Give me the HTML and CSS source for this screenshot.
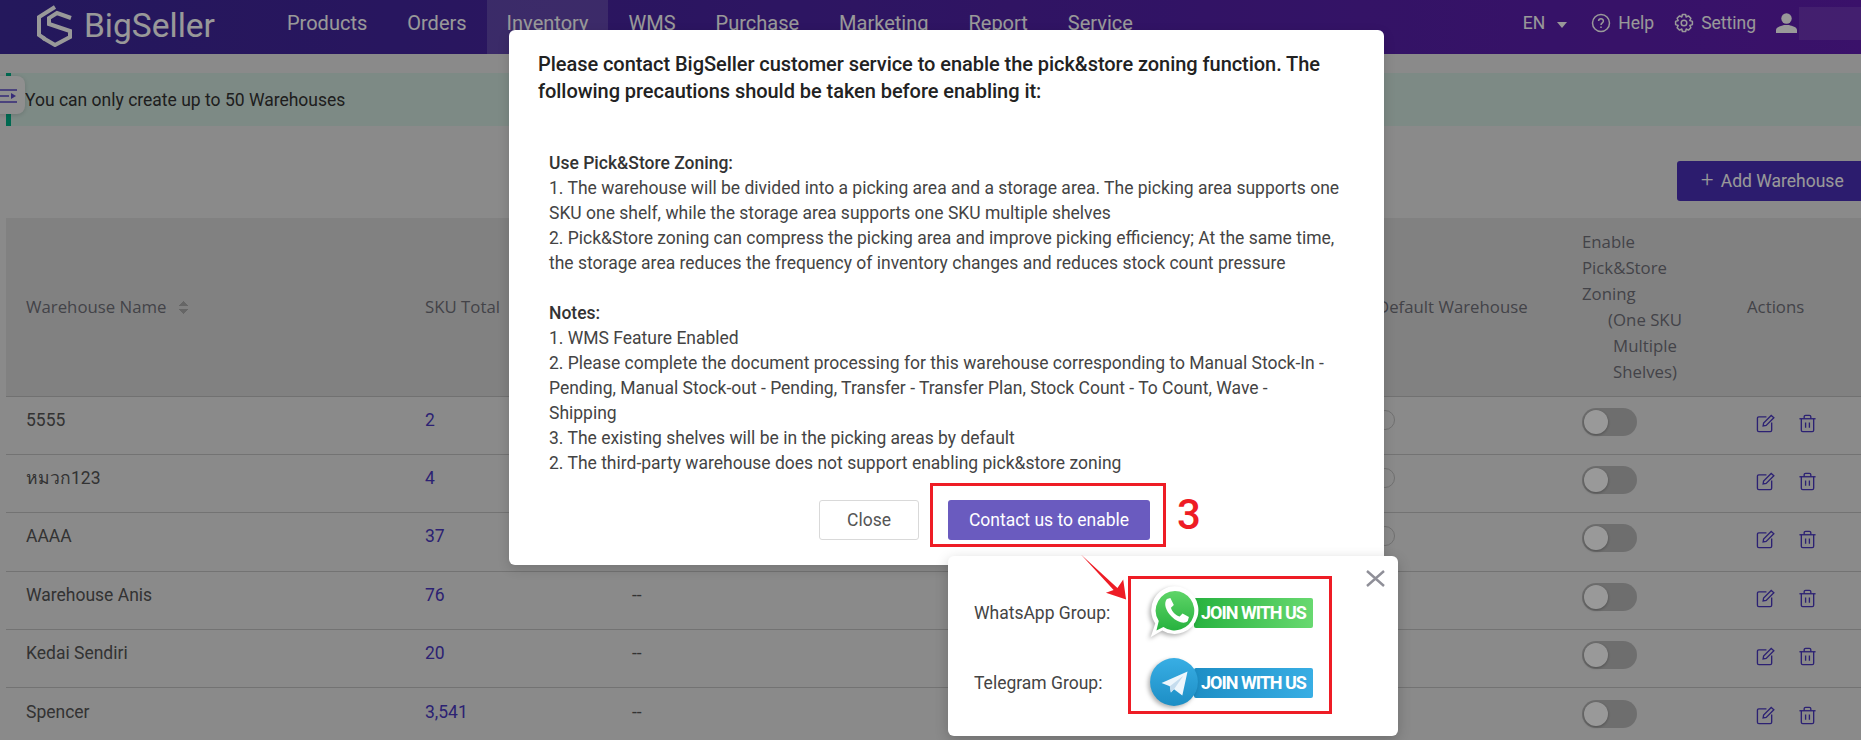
FILE: index.html
```html
<!DOCTYPE html>
<html>
<head>
    <title>BigSeller - Warehouses</title>
    <link rel="stylesheet" href="styles.css">
</head>
<body>
    <header class="topbar">
        <div class="logo">
            <svg class="logo-mark" viewBox="0 0 36 42" fill="none" stroke="currentColor" stroke-width="4">
                <path d="M18 2 L2 12 V30 L8 34"/>
                <path d="M34 13 L20 8 L12 13 V19 L33 26 V32 L18 40 L6 33"/>
            </svg>
            <span class="logo-text">BigSeller</span>
        </div>
        <nav class="nav">
            <a class="nav-item">Products</a>
            <a class="nav-item">Orders</a>
            <a class="nav-item active">Inventory</a>
            <a class="nav-item">WMS</a>
            <a class="nav-item">Purchase</a>
            <a class="nav-item">Marketing</a>
            <a class="nav-item">Report</a>
            <a class="nav-item">Service</a>
        </nav>
        <div class="top-right">
            <span class="lang">EN <i class="caret"></i></span>
            <span class="top-link">
                <svg class="top-icon" viewBox="0 0 20 20" fill="none" stroke="currentColor" stroke-width="1.5">
                    <circle cx="10" cy="10" r="8.5"/>
                    <path d="M7.6 8 C7.6 5 12.4 5 12.4 8 C12.4 10 10 9.8 10 12"/>
                    <path d="M10 13.6 V15"/>
                </svg>
                Help
            </span>
            <span class="top-link">
                <svg class="top-icon" viewBox="0 0 20 20" fill="none" stroke="currentColor" stroke-width="1.5">
                    <path d="M8.4 1.5 H11.6 L12.2 4 L14.4 2.9 L16.9 5.2 L15.8 7.5 L18.4 8.4 V11.6 L15.8 12.5 L16.9 14.8 L14.4 17.1 L12.2 16 L11.6 18.5 H8.4 L7.8 16 L5.6 17.1 L3.1 14.8 L4.2 12.5 L1.6 11.6 V8.4 L4.2 7.5 L3.1 5.2 L5.6 2.9 L7.8 4 Z" stroke-linejoin="round"/>
                    <circle cx="10" cy="10" r="2.8"/>
                </svg>
                Setting
            </span>
            <svg class="user-icon" viewBox="0 0 21 20" fill="currentColor">
                <circle cx="10.5" cy="5.5" r="5.2"/>
                <path d="M0 20 V17 C0 14 5 13 8 12 H13 C16 13 21 14 21 17 V20 Z"/>
            </svg>
            <span class="user-name"></span>
        </div>
    </header>

    <main class="content">
        <div class="alert">You can only create up to 50 Warehouses</div>
        <div class="toolbar">
            <button class="add-btn"><span class="plus">+</span> Add Warehouse</button>
        </div>
        <table class="wh-table">
            <colgroup>
                <col class="col-name">
                <col class="col-sku">
                <col class="col-type">
                <col class="col-default">
                <col class="col-zoning">
                <col class="col-actions">
            </colgroup>
            <thead>
                <tr>
                    <th>Warehouse Name <i class="sort"></i></th>
                    <th>SKU Total</th>
                    <th></th>
                    <th>Default Warehouse</th>
                    <th>
                        Enable<br>Pick&amp;Store<br>Zoning
                        <div class="th-center">(One SKU Multiple Shelves)</div>
                    </th>
                    <th>Actions</th>
                </tr>
            </thead>
            <tbody>
                <tr>
                    <td>5555</td><td class="sku">2</td><td></td>
                    <td><i class="radio"></i></td>
                    <td><i class="switch"></i></td>
                    <td class="actions">
                        <svg class="act" viewBox="0 0 20 20"><path d="M11 3 H3 Q1.5 3 1.5 4.5 V17 Q1.5 18.500 3 18.500 H15 Q16.500 18.500 16.500 17 V9"/><path d="M7.500 12.500 L8 9.500 L16 1.500 L18.800 4 L10.700 12 Z"/></svg>
                        <svg class="act" viewBox="0 0 20 20"><path d="M1.500 5 H18.500"/><path d="M6.500 5 V3 Q6.500 1.500 8 1.500 H12 Q13.500 1.500 13.500 3 V5"/><path d="M3.500 5 V17 Q3.500 18.500 5 18.500 H15 Q16.500 18.500 16.500 17 V5"/><path d="M8 9 V14.500 M12 9 V14.500"/></svg>
                    </td>
                </tr>
                <tr>
                    <td>หมวก123</td><td class="sku">4</td><td></td>
                    <td><i class="radio"></i></td>
                    <td><i class="switch"></i></td>
                    <td class="actions">
                        <svg class="act" viewBox="0 0 20 20"><path d="M11 3 H3 Q1.5 3 1.5 4.5 V17 Q1.5 18.500 3 18.500 H15 Q16.500 18.500 16.500 17 V9"/><path d="M7.500 12.500 L8 9.500 L16 1.500 L18.800 4 L10.700 12 Z"/></svg>
                        <svg class="act" viewBox="0 0 20 20"><path d="M1.500 5 H18.500"/><path d="M6.500 5 V3 Q6.500 1.500 8 1.500 H12 Q13.500 1.500 13.500 3 V5"/><path d="M3.500 5 V17 Q3.500 18.500 5 18.500 H15 Q16.500 18.500 16.500 17 V5"/><path d="M8 9 V14.500 M12 9 V14.500"/></svg>
                    </td>
                </tr>
                <tr>
                    <td>AAAA</td><td class="sku">37</td><td></td>
                    <td><i class="radio"></i></td>
                    <td><i class="switch"></i></td>
                    <td class="actions">
                        <svg class="act" viewBox="0 0 20 20"><path d="M11 3 H3 Q1.5 3 1.5 4.5 V17 Q1.5 18.500 3 18.500 H15 Q16.500 18.500 16.500 17 V9"/><path d="M7.500 12.500 L8 9.500 L16 1.500 L18.800 4 L10.700 12 Z"/></svg>
                        <svg class="act" viewBox="0 0 20 20"><path d="M1.500 5 H18.500"/><path d="M6.500 5 V3 Q6.500 1.500 8 1.500 H12 Q13.500 1.500 13.500 3 V5"/><path d="M3.500 5 V17 Q3.500 18.500 5 18.500 H15 Q16.500 18.500 16.500 17 V5"/><path d="M8 9 V14.500 M12 9 V14.500"/></svg>
                    </td>
                </tr>
                <tr>
                    <td>Warehouse Anis</td><td class="sku">76</td><td>--</td>
                    <td><i class="radio"></i></td>
                    <td><i class="switch"></i></td>
                    <td class="actions">
                        <svg class="act" viewBox="0 0 20 20"><path d="M11 3 H3 Q1.5 3 1.5 4.5 V17 Q1.5 18.500 3 18.500 H15 Q16.500 18.500 16.500 17 V9"/><path d="M7.500 12.500 L8 9.500 L16 1.500 L18.800 4 L10.700 12 Z"/></svg>
                        <svg class="act" viewBox="0 0 20 20"><path d="M1.500 5 H18.500"/><path d="M6.500 5 V3 Q6.500 1.500 8 1.500 H12 Q13.500 1.500 13.500 3 V5"/><path d="M3.500 5 V17 Q3.500 18.500 5 18.500 H15 Q16.500 18.500 16.500 17 V5"/><path d="M8 9 V14.500 M12 9 V14.500"/></svg>
                    </td>
                </tr>
                <tr>
                    <td>Kedai Sendiri</td><td class="sku">20</td><td>--</td>
                    <td><i class="radio"></i></td>
                    <td><i class="switch"></i></td>
                    <td class="actions">
                        <svg class="act" viewBox="0 0 20 20"><path d="M11 3 H3 Q1.5 3 1.5 4.5 V17 Q1.5 18.500 3 18.500 H15 Q16.500 18.500 16.500 17 V9"/><path d="M7.500 12.500 L8 9.500 L16 1.500 L18.800 4 L10.700 12 Z"/></svg>
                        <svg class="act" viewBox="0 0 20 20"><path d="M1.500 5 H18.500"/><path d="M6.500 5 V3 Q6.500 1.500 8 1.500 H12 Q13.500 1.500 13.500 3 V5"/><path d="M3.500 5 V17 Q3.500 18.500 5 18.500 H15 Q16.500 18.500 16.500 17 V5"/><path d="M8 9 V14.500 M12 9 V14.500"/></svg>
                    </td>
                </tr>
                <tr>
                    <td>Spencer</td><td class="sku">3,541</td><td>--</td>
                    <td><i class="radio"></i></td>
                    <td><i class="switch"></i></td>
                    <td class="actions">
                        <svg class="act" viewBox="0 0 20 20"><path d="M11 3 H3 Q1.5 3 1.5 4.5 V17 Q1.5 18.500 3 18.500 H15 Q16.500 18.500 16.500 17 V9"/><path d="M7.500 12.500 L8 9.500 L16 1.500 L18.800 4 L10.700 12 Z"/></svg>
                        <svg class="act" viewBox="0 0 20 20"><path d="M1.500 5 H18.500"/><path d="M6.500 5 V3 Q6.500 1.500 8 1.500 H12 Q13.500 1.500 13.500 3 V5"/><path d="M3.500 5 V17 Q3.500 18.500 5 18.500 H15 Q16.500 18.500 16.500 17 V5"/><path d="M8 9 V14.500 M12 9 V14.500"/></svg>
                    </td>
                </tr>
            </tbody>
        </table>
    </main>

    <div class="side-toggle">
        <svg viewBox="0 0 18 16" fill="none" stroke="currentColor" stroke-width="1.6">
            <path d="M0 2 H17 M0 8 H9 M0 14 H17"/>
            <path d="M11 5 L16 8 L11 11 Z" fill="currentColor" stroke="none"/>
        </svg>
    </div>

    <div class="mask"></div>

    <div class="dialog">
        <h2 class="dialog-title">Please contact BigSeller customer service to enable the pick&amp;store zoning function. The following precautions should be taken before enabling it:</h2>
        <div class="dialog-body">
            <p><b>Use Pick&amp;Store Zoning:</b></p>
            <p>1. The warehouse will be divided into a picking area and a storage area. The picking area supports one SKU one shelf, while the storage area supports one SKU multiple shelves</p>
            <p>2. Pick&amp;Store zoning can compress the picking area and improve picking efficiency; At the same time, the storage area reduces the frequency of inventory changes and reduces stock count pressure</p>
            <p class="spacer"></p>
            <p><b>Notes:</b></p>
            <p>1. WMS Feature Enabled</p>
            <p>2. Please complete the document processing for this warehouse corresponding to Manual Stock-In - Pending, Manual Stock-out - Pending, Transfer - Transfer Plan, Stock Count - To Count, Wave -<br>Shipping</p>
            <p>3. The existing shelves will be in the picking areas by default</p>
            <p>2. The third-party warehouse does not support enabling pick&amp;store zoning</p>
        </div>
        <div class="dialog-footer">
            <button class="btn-close">Close</button>
            <button class="btn-contact">Contact us to enable</button>
        </div>
    </div>

    <div class="popup">
        <svg class="popup-x" viewBox="0 0 19 17" fill="none" stroke="currentColor" stroke-width="2.4"><path d="M1 1 L18 16 M18 1 L1 16"/></svg>
        <div class="group-row">
            <span class="group-label">WhatsApp Group:</span>
            <div class="badge">
                <div class="badge-bar bar-green">JOIN WITH US</div>
                <svg class="badge-icon icon-wa" viewBox="0 0 46 50">
                    <defs>
                        <linearGradient id="wa" x1="0" y1="0" x2="0" y2="1">
                            <stop offset="0" stop-color="#5fd568"/>
                            <stop offset="1" stop-color="#27b23f"/>
                        </linearGradient>
                    </defs>
                    <path d="M23 2 A20.500 20.500 0 1 1 12 40 L2 46 L6 34 A20.500 20.500 0 0 1 23 2 Z" fill="#fff"/>
                    <path d="M23 6 A17 17 0 1 1 13 37 L7 40 L9 32 A17 17 0 0 1 23 6 Z" fill="url(#wa)"/>
                    <path d="M16 13 L19 12 L22 18 L19.500 20.500 C20.500 24 23.500 27 27 28 L29.500 25.500 L35 28.500 L34 32 C31 35 25 33 20 28 C15 23 13 17 16 13 Z" fill="#fff"/>
                </svg>
            </div>
        </div>
        <div class="group-row">
            <span class="group-label">Telegram Group:</span>
            <div class="badge">
                <div class="badge-bar bar-blue">JOIN WITH US</div>
                <svg class="badge-icon icon-tg" viewBox="0 0 46 50">
                    <defs>
                        <linearGradient id="tg" x1="0" y1="0" x2="0" y2="1">
                            <stop offset="0" stop-color="#38aee4"/>
                            <stop offset="1" stop-color="#1d8ec5"/>
                        </linearGradient>
                    </defs>
                    <circle cx="23" cy="25" r="23" fill="url(#tg)"/>
                    <path d="M11 26 L36 15 L31 38 L23 32 L20 35 L19 29 Z" fill="#eef6fc"/>
                    <path d="M19 29 L32 19 L23 32 L20 35 Z" fill="#c5dcee"/>
                </svg>
            </div>
        </div>
    </div>

    <!-- annotations drawn over the screenshot -->
    <div class="mark mark-contact"></div>
    <div class="mark mark-groups"></div>
    <div class="step-no">3</div>
    <svg class="mark-arrow" viewBox="0 0 50 50">
        <path d="M1 1 L39 36 L45 27 L48 48 L27 41 L35 38 Z" fill="#ee1c25"/>
    </svg>
</body>
</html>
```

FILE: styles.css
```css
* {
    box-sizing: border-box;
}

html, body {
    margin: 0;
    height: 740px;
    overflow: hidden;
}

body {
    position: relative;
    font-family: Roboto, "Noto Sans", sans-serif;
    font-size: 17.5px;
    color: #555;
    background-color: #e6e6e6;
}

.topbar {
    display: flex;
    align-items: center;
    height: 54px;
    color: #fff;
    background: linear-gradient(90deg, #3c2899, #611db1);
}

.logo {
    display: flex;
    align-items: center;
    width: 267px;
    padding: 0 0 3px 37px;
}

.logo-mark {
    width: 36px;
    height: 42px;
}

.logo-text {
    margin-left: 11px;
    font-size: 33.5px;
}

.nav {
    display: flex;
    align-self: stretch;
}

.nav-item {
    display: flex;
    align-items: center;
    padding: 0 20px 8px;
    font-size: 20px;
}

.nav-item.active {
    background-color: rgba(255, 255, 255, .16);
}

.top-right {
    display: flex;
    align-items: center;
    margin-left: auto;
    padding-bottom: 8px;
}

.lang {
    display: flex;
    align-items: center;
    margin-right: 23px;
}

.caret {
    display: inline-block;
    margin: 3px 1px 0 12px;
    border-style: solid;
    border-width: 6px 5px 0;
    border-color: #fff transparent transparent;
}

.top-link {
    display: flex;
    align-items: center;
    margin-right: 20px;
}

.top-icon {
    width: 20px;
    height: 20px;
    margin-right: 7px;
}

.user-icon {
    width: 21px;
    height: 20px;
}

.user-name {
    display: block;
    width: 62px;
    height: 33px;
    margin-left: 2px;
    background-color: rgba(255, 255, 255, .1);
}

.content {
    padding-left: 6px;
}

.alert {
    height: 53px;
    margin-top: 19px;
    padding: 1px 0 0 14px;
    line-height: 53px;
    color: #333;
    border-left: 5px solid #00b088;
    background-color: #d0e6de;
}

.toolbar {
    display: flex;
    justify-content: flex-end;
    margin-top: 35px;
    margin-bottom: 17px;
}

.add-btn {
    width: 184px;
    height: 40px;
    padding: 0 0 4px 24px;
    text-align: left;
    font: inherit;
    color: #fff;
    border: none;
    border-radius: 3px 0 0 3px;
    background-color: #4a30b8;
}

.plus {
    font-size: 22px;
    font-weight: 300;
    margin-right: 3px;
}

.wh-table {
    width: 1855px;
    table-layout: fixed;
    border-collapse: collapse;
}

.col-name { width: 399px; }
.col-sku { width: 207px; }
.col-type { width: 745px; }
.col-default { width: 205px; }
.col-zoning { width: 165px; }
.col-actions { width: 134px; }

.wh-table th {
    height: 178px;
    padding: 1px 0 0 20px;
    text-align: left;
    font-family: "Open Sans", sans-serif;
    font-size: 16.8px;
    font-weight: 500;
    line-height: 26px;
    color: #707078;
    background-color: #d8d8d8;
    border-bottom: 1px solid #bdbdbd;
}

.th-center {
    width: 126px;
    text-align: center;
}

.sort {
    display: inline-block;
    width: 9px;
    height: 15px;
    margin-left: 8px;
    vertical-align: -2px;
    background:
        linear-gradient(135deg, transparent 50%, #aaa 50%) 0 0 / 5px 6px no-repeat,
        linear-gradient(225deg, transparent 50%, #aaa 50%) 100% 0 / 5px 6px no-repeat,
        linear-gradient(45deg, transparent 50%, #aaa 50%) 0 100% / 5px 6px no-repeat,
        linear-gradient(315deg, transparent 50%, #aaa 50%) 100% 100% / 5px 6px no-repeat;
}

.wh-table td {
    height: 58.4px;
    padding: 0 0 11px 20px;
    color: #555;
    border-bottom: 1px solid #c0c0c0;
}

.wh-table td.sku {
    color: #4a38c0;
}

.radio {
    display: block;
    width: 20px;
    height: 20px;
    margin-left: -2px;
    border: 1px solid #bbb;
    border-radius: 50%;
}

.switch {
    display: block;
    position: relative;
    width: 55px;
    height: 28px;
    margin-top: 4px;
    border-radius: 14px;
    background-color: #b8b8b8;
}

.switch::after {
    content: "";
    position: absolute;
    left: 2px;
    top: 2px;
    width: 24px;
    height: 24px;
    border-radius: 50%;
    background-color: #fff;
    box-shadow: 0 1px 3px rgba(0, 0, 0, .3);
}

.wh-table td.actions {
    padding: 0 0 0 29px;
}

.act {
    width: 19px;
    height: 19px;
    margin-right: 19px;
    fill: none;
    stroke: #4a38c0;
    stroke-width: 1.4;
}

.side-toggle {
    position: absolute;
    left: -8px;
    top: 76px;
    width: 33px;
    height: 38px;
    padding: 12px 0 0 8px;
    color: #5a48c8;
    border-radius: 8px;
    background-color: #eee;
    box-shadow: 0 1px 4px rgba(0, 0, 0, .15);
}

.side-toggle svg {
    display: block;
    width: 18px;
    height: 16px;
}

.mask {
    position: absolute;
    inset: 0;
    background-color: rgba(0, 0, 0, .4);
}

.dialog {
    position: absolute;
    left: 509px;
    top: 30px;
    width: 875px;
    height: 535px;
    padding: 21px 40px 0 29px;
    color: #444;
    border-radius: 6px;
    background-color: #fff;
    box-shadow: 0 4px 12px rgba(0, 0, 0, .15);
}

.dialog-title {
    margin: 0;
    font-size: 20px;
    font-weight: 500;
    line-height: 27px;
    letter-spacing: -.05px;
    color: #222;
}

.dialog-body {
    margin-top: 46px;
    padding-left: 11px;
    line-height: 25px;
}

.dialog-body p {
    margin: 0;
}

.dialog-body b {
    font-weight: 500;
    color: #333;
}

.spacer {
    height: 25px;
}

.dialog-footer {
    display: flex;
    gap: 29px;
    margin-top: 24px;
    padding-left: 281px;
}

.dialog-footer button {
    height: 40px;
    font: inherit;
    border-radius: 3px;
}

.btn-close {
    width: 100px;
    color: #555;
    border: 1px solid #d9d9d9;
    background-color: #fff;
}

.btn-contact {
    width: 202px;
    color: #fff;
    border: none;
    background-color: #6a5bbf;
}

.popup {
    position: absolute;
    left: 948px;
    top: 556px;
    display: flex;
    flex-direction: column;
    gap: 24px;
    width: 450px;
    height: 180px;
    padding: 34px 0 0 26px;
    color: #444;
    border-radius: 6px;
    background-color: #fff;
    box-shadow: 0 4px 14px rgba(0, 0, 0, .2);
}

.popup-x {
    position: absolute;
    left: 418px;
    top: 14px;
    width: 19px;
    height: 17px;
    color: #8f8f98;
}

.group-row {
    display: flex;
    align-items: center;
}

.group-label {
    width: 182px;
}

.badge {
    position: relative;
    width: 157px;
    height: 46px;
}

.badge-bar {
    height: 30px;
    margin: 8px 0 0 38px;
    padding-left: 7px;
    font-size: 18px;
    font-weight: 700;
    letter-spacing: -1px;
    line-height: 30px;
    color: #fff;
    border-radius: 2px;
}

.bar-green {
    background: linear-gradient(90deg, #27b23f, #68d970);
}

.bar-blue {
    background: linear-gradient(90deg, #1d8ec5, #38aee4);
}

.badge-icon {
    position: absolute;
    filter: drop-shadow(-2px 2px 2px rgba(0, 0, 0, .3));
}

.icon-wa {
    left: -8px;
    top: -6px;
    width: 54px;
    height: 58px;
}

.icon-tg {
    left: -6px;
    top: -4px;
    width: 48px;
    height: 52px;
}

.mark {
    position: absolute;
    border: 3px solid #ee1c25;
}

.mark-contact {
    left: 930px;
    top: 483px;
    width: 236px;
    height: 64px;
}

.mark-groups {
    left: 1128px;
    top: 576px;
    width: 204px;
    height: 138px;
}

.step-no {
    position: absolute;
    left: 1177px;
    top: 490px;
    font-size: 42px;
    font-weight: 500;
    line-height: 50px;
    color: #ee1c25;
}

.mark-arrow {
    position: absolute;
    left: 1080px;
    top: 553px;
    width: 48px;
    height: 49px;
}
```
